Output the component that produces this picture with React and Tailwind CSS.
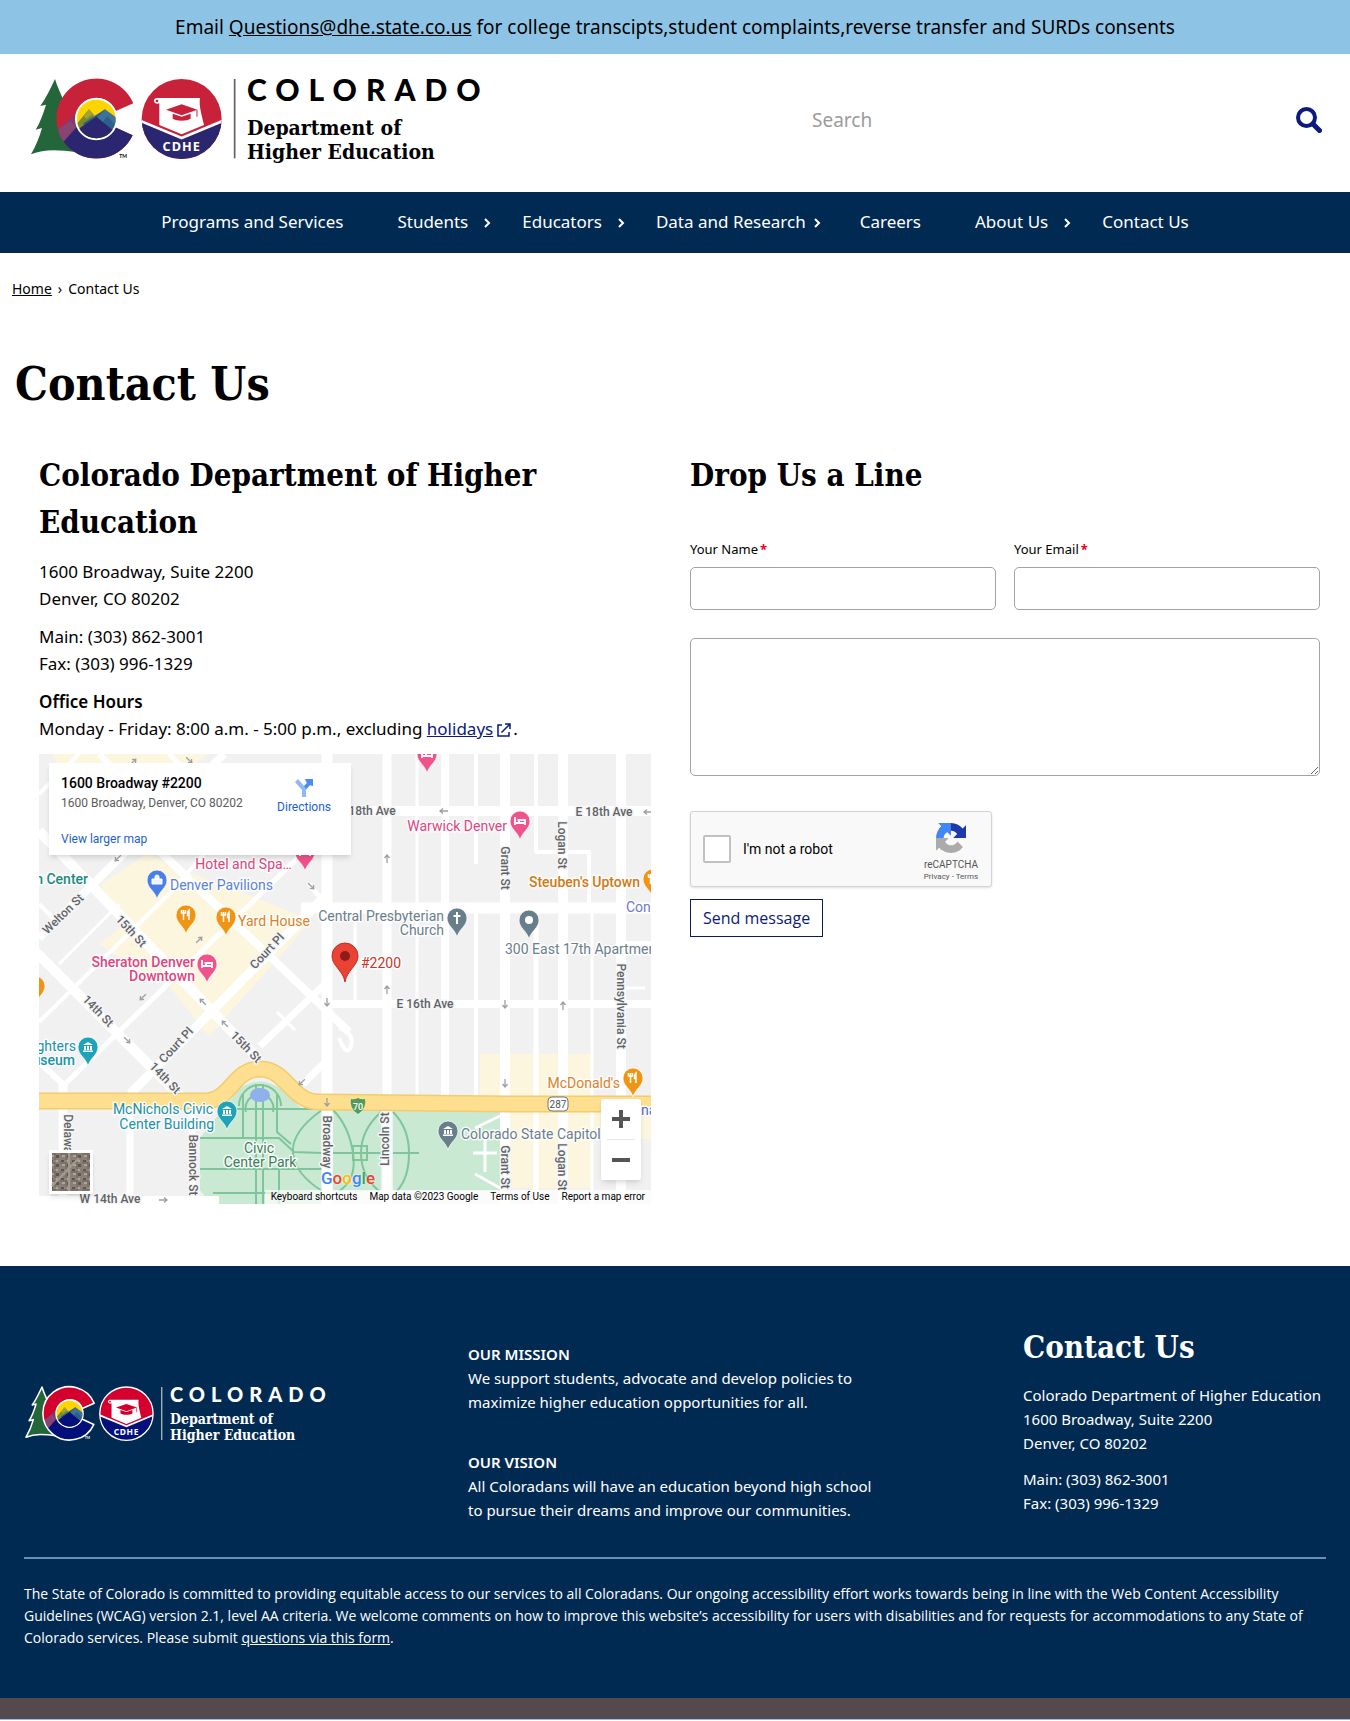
import React from 'react';

const SLAB = "font-['DejaVu_Serif_Condensed','DejaVu_Serif',serif]";
const h2Class = "font-['DejaVu_Serif_Condensed','DejaVu_Serif',serif] text-[31px] leading-[47px] font-bold";

function Logo({ inverse = false, className }) {
  const ink = inverse ? 'fill-white' : 'fill-black';
  const red = inverse ? '#d3002f' : '#c8213a';
  const navy = inverse ? '#03107c' : '#2a2770';
  const outline = inverse ? '#ffffff' : 'none';
  return (
    <svg viewBox="0 0 456 90" className={className} role="img" aria-label="Colorado Department of Higher Education">
      <g transform="translate(-8 -6) scale(.3333)">
        <path
          d="M105 27 C92 55 78 85 61 108 L78 104 C70 132 60 158 47 179 L66 174 C58 204 46 230 33 253 C75 236 115 240 175 247 L175 60 L133 95 C122 72 112 50 105 27Z"
          fill="#23663a" stroke={outline} strokeWidth={inverse ? 7 : 0} strokeLinejoin="round"
        />
        <clipPath id={inverse ? 'cLetterInv' : 'cLetter'}>
          <path d="M340 100 A120 120 0 1 0 338 196 L282 170 A58 58 0 1 1 286 124Z" />
        </clipPath>
        <g clipPath={inverse ? 'url(#cLetterInv)' : 'url(#cLetter)'}>
          <rect x="100" y="20" width="260" height="260" fill={red} />
          <path d="M100 240 L210 118 L350 150 V290 H100Z" fill={navy} />
          <path d="M95 230 L108 182 L182 118 L190 150 L130 216 Z" fill="#7b3b74" opacity=".85" />
          <path d="M108 182 L150 152 L168 170 L130 216 L112 195Z" fill="#8b4a77" opacity=".7" />
        </g>
        {inverse && (
          <path d="M340 100 A120 120 0 1 0 338 196 L282 170 A58 58 0 1 1 286 124Z" fill="none" stroke="#fff" strokeWidth="7" strokeLinejoin="round" />
        )}
        <circle cx="229" cy="147" r="61" fill="#fed500" stroke="#fff" strokeWidth="6" />
        <clipPath id={inverse ? 'sunInv' : 'sun'}><circle cx="229" cy="147" r="58" /></clipPath>
        <g clipPath={inverse ? 'url(#sunInv)' : 'url(#sun)'}>
          <path d="M150 185 L207 118 L270 190 V210 H150Z" fill="#7a8a2c" />
          <path d="M190 160 L255 118 L300 165 V210 H200Z" fill="#2c5f8d" />
          <path d="M255 118 L232 143 L246 158 L262 138 L290 170 L300 150Z" fill="#3c7397" />
          <path d="M207 118 L190 138 L200 146 L215 134 L226 144Z" fill="#a3a238" />
          <path d="M168 205 L168 182 L229 140 L290 190 V215 H168Z" fill={navy} />
        </g>
        <circle cx="485" cy="147" r="120" fill={red} />
        <clipPath id={inverse ? 'oInv' : 'o'}><circle cx="485" cy="147" r="120" /></clipPath>
        <g clipPath={inverse ? 'url(#oInv)' : 'url(#o)'}>
          <path d="M360 152 L485 204 L610 152 V280 H360Z" fill={navy} />
          <path d="M360 152 L485 204 L610 152" fill="none" stroke="#fff" strokeWidth="8" />
        </g>
        {inverse && <circle cx="485" cy="147" r="120" fill="none" stroke="#fff" strokeWidth="6" />}
        <path d="M412 84 H540 C536 108 546 138 552 165 L485 193 L418 165 V100 C410 104 402 98 402 92 C402 87 406 84 412 84Z" fill="#fff" />
        <circle cx="411" cy="93" r="4" fill={red} />
        <path d="M485 103 L532 119 L485 136 L438 119Z" fill={red} />
        <path d="M458 131 L485 140 L512 131 V146 C500 154 470 154 458 146Z" fill={red} />
        <path d="M531 119 V140" stroke={red} strokeWidth="3" />
        <text x="485" y="242" textAnchor="middle" className="fill-white font-['Noto_Sans'] text-[38px] font-bold tracking-[3px]">CDHE</text>
        <text x="298" y="263" className={`${ink} font-[Lato] text-[15px] font-bold`}>TM</text>
        <path d="M644 27 V265" stroke={inverse ? '#c9d3e0' : '#5f6062'} strokeWidth="5" />
      </g>
      <text x="219" y="25" className={`${ink} font-[Lato] text-[30px] font-black tracking-[9px]`}>COLORADO</text>
      <text x="219" y="59" className={`${ink} ${SLAB} text-[21px] font-bold`}>Department of</text>
      <text x="219" y="83" className={`${ink} ${SLAB} text-[21px] font-bold`}>Higher Education</text>
    </svg>
  );
}

const NAV = [
  { label: 'Programs and Services' },
  { label: 'Students', chevron: 'right-1' },
  { label: 'Educators', chevron: 'right-1' },
  { label: 'Data and Research', chevron: 'right-3' },
  { label: 'Careers' },
  { label: 'About Us', chevron: 'right-1' },
  { label: 'Contact Us' },
];

const PINK = '#e0457f';
const ORANGE = '#d9822b';
const SLATE = '#6b7f8c';
const TEAL = '#1b93a8';
const STREET = '#5f6368';

// Streets: [path, width]
const ROADS = [
  ['M348 0V450', 9], ['M378 0V345', 3], ['M406 0V345', 8], ['M437 0V110', 4], ['M437 154V345', 4],
  ['M466 0V450', 10], ['M497 0V98H550V154', 4], ['M497 154V450', 5], ['M524 0V450', 10], ['M553 150V450', 3],
  ['M582 0V450', 10], ['M316 154V250', 3], ['M288 0V450', 11], ['M260 57H612', 10], ['M262 154H612', 11],
  ['M288 250H612', 8], ['M0 446H180', 8], ['M586 189H612', 4], ['M586 234H606', 3],
  ['M0 77L221 307', 10], ['M-4 197L145 346', 10], ['M91 340L173 257L288 140', 9], ['M0 184L185 0', 8],
  ['M84 62L178 152L310 278', 8], ['M24 332L275 88', 5], ['M0 268L130 140L200 60', 4], ['M221 292L288 228', 7],
  ['M264 330L290 304', 7], ['M24 327V450', 9], ['M91 345V446', 7], ['M153 345V446', 7], ['M0 308L26 332', 6],
  ['M0 40L40 0', 4], ['M60 0L130 70', 6], ['M130 0L200 70', 5], ['M238 258L256 276', 3], ['M20 210L80 150', 3],
  ['M270 130L290 154', 5], ['M0 150L14 164', 4],
];

const LABELS = [
  ['Hotel and Spa…', 253, 115, PINK, 'end'],
  ['n Center', 49, 130, '#1c8a80', 'end', true],
  ['Denver Pavilions', 131, 136, '#5b83d6', 'start'],
  ['Yard House', 199, 172, ORANGE, 'start'],
  ['Sheraton Denver', 156, 213, PINK, 'end', true],
  ['Downtown', 156, 227, PINK, 'end', true],
  ['Central Presbyterian', 405, 167, SLATE, 'end'],
  ['Church', 405, 181, SLATE, 'end'],
  ['#2200', 322, 214, '#c5362c', 'start'],
  ['Warwick Denver', 468, 77, PINK, 'end'],
  ["Steuben's Uptown", 601, 133, '#d07a12', 'end', true],
  ['Con', 587, 158, '#6f78cf', 'start'],
  ['300 East 17th Apartments', 466, 200, SLATE, 'start'],
  ['ghters', 37, 297, TEAL, 'end'],
  ['useum', 36, 311, TEAL, 'end', true],
  ['McNichols Civic', 174, 360, TEAL, 'end'],
  ['Center Building', 175, 375, TEAL, 'end'],
  ['Civic', 220, 399, '#3d7f5c', 'middle'],
  ['Center Park', 221, 413, '#3d7f5c', 'middle'],
  ['Colorado State Capitol', 422, 385, SLATE, 'start'],
  ["McDonald's", 581, 334, ORANGE, 'end'],
  ['na', 602, 361, '#4a6fe0', 'start'],
];

// Street names: [text, centre x, centre y, angle]
const STREETS = [
  ['18th Ave', 333, 57, 0], ['E 18th Ave', 565, 58, 0], ['E 16th Ave', 386, 250, 0], ['W 14th Ave', 71, 445, 0],
  ['Grant St', 466, 114, 90], ['Logan St', 523, 91, 90], ['Grant St', 466, 413, 90], ['Logan St', 523, 413, 90],
  ['Pennsylvania St', 582, 252, 90], ['Lincoln St', 346, 385, -90], ['Broadway', 288, 388, 90],
  ['Bannock St', 154, 411, 90], ['Delaware', 29, 385, 90], ['Welton St', 24, 160, -44], ['15th St', 92, 177, 47],
  ['Court Pl', 228, 197, -47], ['14th St', 59, 257, 46], ['Court Pl', 137, 291, -47], ['14th St', 126, 324, 46],
  ['15th St', 207, 293, 46],
];

const GLYPHS = {
  bed: <path d="M-5 -4V4M-5 2H5M5 4V-1H-1V2M-3 -1h.5" fill="none" stroke="#fff" strokeWidth="1.8" />,
  food: <path d="M-2.5 -5V5M-4.5 -5v3h4v-3M3 5V-5q-2 2 -1.500 5.500h1.500" fill="none" stroke="#fff" strokeWidth="1.5" />,
  bag: <path d="M-5 -1H5V4H-5ZM-2 -1V-3a2 2 0 0 1 4 0V-1" fill="#fff" fillOpacity=".9" stroke="#fff" />,
  cross: <path d="M0 -6V6M-3.500 -2H3.500" stroke="#fff" strokeWidth="2" />,
  dot: <circle r="4" fill="#fff" />,
  museum: <path d="M-5 -2L0 -5L5 -2ZM-4 -1H-2V3H-4ZM-1 -1H1V3H-1ZM2 -1H4V3H2ZM-5 3.500H5V5H-5Z" fill="#fff" />,
};

const PINS = [
  [118, 126, '#4a7fe8', 'bag'], [147, 161, '#ef9413', 'food'], [187, 163, '#ef9413', 'food'], [168, 210, '#f0528b', 'bed'],
  [266, 98, '#f0528b', 'bed'], [388, 0, '#f0528b', 'bed'], [481, 67, '#f0528b', 'bed'], [418, 164, '#687f8b', 'cross'],
  [490, 166, '#687f8b', 'dot'], [614, 125, '#ef9413', 'food'], [-4, 232, '#ef9413', 'food'], [49, 293, '#1fa3b8', 'museum'],
  [188, 357, '#1fa3b8', 'museum'], [409, 377, '#687f8b', 'museum'], [594, 324, '#ef9413', 'food'],
];

const ARROWS = [
  [405, 57, 180], [348, 105, -90], [348, 236, -90], [466, 250, 90], [524, 252, -90], [466, 329, 90], [288, 248, 90],
  [288, 348, 90], [124, 446, 0], [104, 243, 135], [88, 286, 45], [164, 248, 225], [186, 270, 225], [263, 328, 135],
  [160, 186, -45], [79, 104, 135], [272, 132, 45], [94, 8, -45], [150, 6, 45], [609, 58, 180],
];

function MapDrawing() {
  return (
    <svg viewBox="0 0 612 450" preserveAspectRatio="xMidYMid slice" className="block h-full w-full bg-[#f1f1f2]" role="img" aria-label="Map of 1600 Broadway, Denver">
      <g fill="#fdf6de">
        <path d="M14 0H170L140 20H80L24 22Z" />
        <path d="M62 130L108 100L150 118L270 165L262 178L170 282L120 220L66 150Z" />
        <path d="M441 300H553V434H441Z" />
        <path d="M553 350H612V385H553Z" />
      </g>
      <path d="M60 190L150 120L182 150L108 222Z" fill="#fdf6de" />
      <g fill="#c9e9d3">
        <path d="M161 384L172 370L200 335Q221 320 242 335L262 354H283V450H172L161 436Z" />
        <path d="M294 356H342V437H294Z" />
        <path d="M354 357H461V437H354Z" />
      </g>
      <g fill="none" stroke="#7fc59b" strokeWidth="2">
        <path d="M180 355H283M161 384H240L255 398L283 399M161 415H283M174 439H240M217 330V450M224 330V450M204 340V384M238 340V378L252 390M240 450V412L252 402" />
        <path d="M200 352A20 20 0 0 1 242 352M207 358A14 14 0 1 1 234 358M283 356Q252 378 254 399T283 437M294 356Q310 372 314 399T300 437" />
        <path d="M342 358Q322 376 322 399T340 437M354 358Q370 374 370 399T358 437M294 399H342M354 399H380M314 392H328V406H314Z" />
      </g>
      <ellipse cx="221" cy="341" rx="10" ry="7" fill="#8fb0ea" />
      <g fill="none" stroke="#fff" strokeLinejoin="round">
        {ROADS.map(([d, w]) => <path key={d} d={d} strokeWidth={w} />)}
        <path d="M436 374L461 362M446 380V418M434 399H458M436 420L461 434" strokeWidth="3" />
        <path d="M300 274Q316 280 312 292T300 284" strokeWidth="4" />
      </g>
      <path d="M0 347H166C192 347 194 315 221 315S252 348 280 348L470 350H612" fill="none" stroke="#f2cc6d" strokeWidth="17" />
      <path d="M0 347H166C192 347 194 315 221 315S252 348 280 348L470 350H612" fill="none" stroke="#fddf8f" strokeWidth="14" />
      <g fill="none" stroke="#9aa0a6" strokeWidth="1.3">
        {ARROWS.map(([x, y, a]) => (
          <path key={`${x}-${y}`} d="M-4 0H4M1 -2.500L4 0L1 2.500" transform={`translate(${x} ${y}) rotate(${a})`} />
        ))}
      </g>
      <g stroke="#f5f5f5" strokeWidth="3" strokeLinejoin="round" className="font-[Roboto] text-[12px] font-medium [paint-order:stroke]">
        {STREETS.map(([t, x, y, a]) => (
          <text key={`${t}-${x}`} fill={STREET} textAnchor="middle" dominantBaseline="central" transform={`translate(${x} ${y}) rotate(${a})`}>{t}</text>
        ))}
      </g>
      <g stroke="#fff" strokeOpacity=".85" strokeWidth="3" strokeLinejoin="round" className="font-[Roboto] text-[14px] [paint-order:stroke]">
        {LABELS.map(([t, x, y, c, anchor, bold]) => (
          <text key={`${t}-${y}`} x={x} y={y} fill={c} textAnchor={anchor} fontWeight={bold ? 500 : 400}>{t}</text>
        ))}
      </g>
      {PINS.map(([x, y, c, glyph]) => (
        <g key={`${x}-${y}`} transform={`translate(${x} ${y})`}>
          <path d="M0 19C-2 11 -10 8 -10 0A10 10 0 0 1 10 0C10 8 2 11 0 19Z" fill={c} stroke="#fff" strokeWidth=".7" />
          {GLYPHS[glyph]}
        </g>
      ))}
      <path d="M306 228C304 216 293 212 293 202A13 13 0 0 1 319 202C319 212 308 216 306 228Z" fill="#ea4335" stroke="#b93126" />
      <circle cx="306" cy="202" r="5" fill="#8c1d18" />
      <path d="M312 345q3.500 1 7 -1q3.500 2 7 1q2 9 -7 15q-9 -6 -7 -15Z" fill="#4f9a5c" />
      <text x="319" y="356" textAnchor="middle" className="fill-white font-[Roboto] text-[9px] font-medium">70</text>
      <rect x="509" y="343" width="20" height="14" rx="4" fill="#fff" stroke="#70757a" />
      <text x="519" y="354" textAnchor="middle" className="fill-[#4d5156] font-[Roboto] text-[10px]">287</text>
    </svg>
  );
}

function MapPanel() {
  return (
    <div className="relative mt-3 h-[450px] overflow-hidden font-[Roboto]">
      <MapDrawing />
      <div className="absolute top-[9px] left-[10px] flex h-[92px] w-[302px] justify-between bg-white px-3 pt-[10px] pb-[6px] shadow-md">
        <div className="flex flex-col text-[12px] leading-[20px]">
          <strong className="text-[14px] leading-[20px] font-medium text-black">1600 Broadway #2200</strong>
          <span className="text-[#5b5b5b]">1600 Broadway, Denver, CO 80202</span>
          <a href="#larger" className="mt-auto text-[#1a62d0]">View larger map</a>
        </div>
        <a href="#directions" className="flex flex-col items-center px-2 pt-1 text-[12px] leading-[20px] text-[#1a62d0]">
          <svg viewBox="0 0 20 20" className="h-5 w-5" aria-hidden="true">
            <path d="M8 20V13L1 5L4 2L10 9L13 6L11 2H19V9L16 8L12 13V20Z" fill="#8fb9f6" />
            <path d="M11 2H19V9L16 8L12 12L10 9L13 6Z" fill="#4a8cf0" />
          </svg>
          Directions
        </a>
      </div>
      <svg viewBox="0 0 44 44" className="absolute bottom-[10px] left-[10px] h-11 w-11 shadow-md" role="img" aria-label="Satellite view">
        <defs>
          <pattern id="blocks" width="11" height="9" patternUnits="userSpaceOnUse">
            <rect width="11" height="9" fill="#8b8078" />
            <path d="M1 1h3v2h-3zM7 5h3v3h-3z" fill="#5d554f" />
            <path d="M5 1h4v2h-4zM2 5h3v2h-3z" fill="#b0a59a" />
            <path d="M0 4h6M6 0v9" stroke="#6e645c" />
          </pattern>
        </defs>
        <rect width="44" height="44" fill="#fff" />
        <rect x="3" y="3" width="38" height="38" fill="url(#blocks)" />
        <path d="M3 36L30 8M20 3V41" stroke="#a39a90" strokeWidth="2" />
      </svg>
      <div className="absolute right-[10px] bottom-6 flex w-10 flex-col items-center rounded-[2px] bg-white text-[#555] shadow-md">
        <button type="button" aria-label="Zoom in" className="grid h-10 w-full place-items-center">
          <svg viewBox="0 0 18 18" className="h-[18px] w-[18px]"><path d="M0 9H18M9 0V18" stroke="currentColor" strokeWidth="4" /></svg>
        </button>
        <span className="h-px w-7 bg-[#e6e6e6]" />
        <button type="button" aria-label="Zoom out" className="grid h-10 w-full place-items-center">
          <svg viewBox="0 0 18 18" className="h-[18px] w-[18px]"><path d="M0 9H18" stroke="currentColor" strokeWidth="4" /></svg>
        </button>
      </div>
      <div className="absolute bottom-4 left-[282px] flex text-[17px] leading-5 font-medium [text-shadow:0_0_2px_white]">
        <span className="text-[#4285f4]">G</span><span className="text-[#ea4335]">o</span><span className="text-[#fbbc05]">o</span>
        <span className="text-[#4285f4]">g</span><span className="text-[#34a853]">l</span><span className="text-[#ea4335]">e</span>
      </div>
      <div className="absolute right-0 bottom-0 flex h-[14px] items-center gap-3 bg-white/70 px-[6px] text-[10px] leading-[14px] text-black">
        <button type="button">Keyboard shortcuts</button>
        <span>Map data ©2023 Google</span>
        <a href="#terms">Terms of Use</a>
        <a href="#report">Report a map error</a>
      </div>
    </div>
  );
}

function Field({ id, label, type }) {
  return (
    <div className="flex flex-col">
      <label htmlFor={id} className="text-[13px] leading-5">
        {label}<span className="ml-[2px] font-bold text-[#f00018]">*</span>
      </label>
      <input id={id} type={type} required className="mt-2 h-[43px] w-full rounded-[5px] border border-[#a3a3a3] px-3 shadow-none outline-none" />
    </div>
  );
}

function Captcha() {
  return (
    <div className="mt-[35px] flex h-[76px] w-[302px] items-center justify-between rounded-[3px] border border-[#d3d3d3] bg-[#f9f9f9] pr-2 pl-3 font-[Roboto] shadow-sm">
      <label className="flex items-center gap-3 text-[14px] leading-5">
        <input type="checkbox" className="h-7 w-7 appearance-none rounded-[2px] border-2 border-[#c1c1c1] bg-white" />
        I'm not a robot
      </label>
      <div className="flex w-16 flex-col items-center pt-2 text-[#555]">
        <svg viewBox="0 0 64 64" className="h-[30px] w-[30px]" aria-hidden="true">
          <path fill="#1c3aa9" d="M64 31.955l-.033-1.37V4.687l-7.16 7.16C50.948 4.674 42.033.093 32.05.093c-10.4 0-19.622 4.96-25.458 12.64l11.736 11.86a15.55 15.55 0 0 1 4.754-5.334c2.050-1.600 4.952-2.906 8.968-2.906.485 0 .86.057 1.135.163 4.976.393 9.288 3.140 11.828 7.124l-8.307 8.307L64 31.953" />
          <path fill="#4285f4" d="M31.862.094l-1.370.033H4.594l7.160 7.160C4.580 13.147 0 22.060 0 32.046c0 10.400 4.960 19.622 12.640 25.458L24.500 45.768a15.550 15.550 0 0 1-5.334-4.754c-1.600-2.050-2.906-4.952-2.906-8.968 0-.485.057-.86.163-1.135.393-4.976 3.140-9.288 7.124-11.828l8.307 8.307L31.860.095" />
          <path fill="#ababab" d="M.001 32.045l.033 1.370v25.898l7.160-7.160c5.860 7.173 14.774 11.754 24.760 11.754 10.400 0 19.622-4.960 25.458-12.640l-11.736-11.860a15.550 15.550 0 0 1-4.754 5.334c-2.050 1.600-4.952 2.906-8.968 2.906-.485 0-.86-.057-1.135-.163-4.976-.393-9.288-3.140-11.828-7.124l8.307-8.307c-10.522.04-22.400.066-27.295-.005" />
        </svg>
        <span className="mt-[6px] text-[10px] leading-3">reCAPTCHA</span>
        <span className="text-[8px] leading-3 whitespace-nowrap">
          <a href="#privacy">Privacy</a> - <a href="#captcha-terms">Terms</a>
        </span>
      </div>
    </div>
  );
}

export default function App() {
  return (
    <div className="bg-white font-['Noto_Sans',sans-serif] text-black">
      <div className="bg-[#8dc4e6] py-[13px] text-center text-[19px] leading-7">
        Email <a href="mailto:Questions@dhe.state.co.us" className="underline">Questions@dhe.state.co.us</a> for college transcipts,student complaints,reverse transfer and SURDs consents
      </div>

      <header>
        <div className="flex items-start justify-between px-7 pt-[22px] pb-[26px]">
          <a href="#home"><Logo className="h-[90px] w-[456px]" /></a>
          <form role="search" className="mt-6 flex w-[510px] items-center">
            <input type="text" aria-label="Search" placeholder="Search" className="h-10 min-w-0 flex-1 bg-transparent text-[19px] outline-none placeholder:text-[#9b9b9b]" />
            <button type="submit" aria-label="Search" className="p-0">
              <svg viewBox="0 0 26 26" className="h-[26px] w-[26px] text-[#0b1a7c]" fill="none" stroke="currentColor">
                <circle cx="10.500" cy="10.500" r="8.500" strokeWidth="4" />
                <path d="M17 17L23.500 23.500" strokeWidth="5" strokeLinecap="round" />
              </svg>
            </button>
          </form>
        </div>
        <nav aria-label="Main" className="bg-[#012a53] pb-[2px]">
          <ul className="flex justify-center">
            {NAV.map((item) => (
              <li key={item.label} className="relative px-[27px]">
                <a href="#nav" className="block text-[17px] leading-[59px] whitespace-nowrap text-white">{item.label}</a>
                {item.chevron && (
                  <svg viewBox="0 0 8 10" className={`absolute top-[26px] h-[10px] w-2 text-white ${item.chevron}`} fill="none" stroke="currentColor" strokeWidth="2" aria-hidden="true">
                    <path d="M2 1L6 5L2 9" />
                  </svg>
                )}
              </li>
            ))}
          </ul>
        </nav>
      </header>

      <main className="pb-[62px]">
        <nav aria-label="Breadcrumb" className="mt-6 flex gap-[6px] px-3 text-[14px] leading-6">
          <a href="#home" className="underline">Home</a>
          <span>›</span>
          <span>Contact Us</span>
        </nav>
        <h1 className={`${SLAB} mt-[55px] px-[15px] text-[46px] leading-[56px] font-bold`}>Contact Us</h1>

        <div className="mt-10 grid grid-cols-[612fr_630fr] gap-x-[39px] pr-[30px] pl-[39px]">
          <section>
            <h2 className={h2Class}>Colorado Department of Higher Education</h2>
            <div className="mt-3 flex flex-col gap-[11px] text-[17px] leading-[27px]">
              <p>1600 Broadway, Suite 2200<br />Denver, CO 80202</p>
              <p>Main: (303) 862-3001<br />Fax: (303) 996-1329</p>
              <p>
                <strong className="font-semibold">Office Hours</strong><br />
                Monday - Friday: 8:00 a.m. - 5:00 p.m., excluding{' '}
                <a href="#holidays" className="text-[#0b1a7c]">
                  <span className="underline">holidays</span>
                  <svg viewBox="0 0 14 14" className="mr-[2px] ml-1 inline h-[14px] w-[14px] align-[-2px]" fill="none" stroke="currentColor" strokeWidth="1.500" aria-hidden="true">
                    <path d="M5 2H1V13H12V9M4.500 9.500L12.500 1.500M8 1H13V6" />
                  </svg>
                </a>.
              </p>
            </div>
            <MapPanel />
          </section>

          <section>
            <h2 className={h2Class}>Drop Us a Line</h2>
            <form className="mt-10">
              <div className="grid grid-cols-2 gap-[18px]">
                <Field id="name" label="Your Name" type="text" />
                <Field id="email" label="Your Email" type="email" />
              </div>
              <textarea aria-label="Message" className="mt-7 block h-[138px] w-full resize-y rounded-[5px] border border-[#a3a3a3] p-3 outline-none" />
              <Captcha />
              <button type="submit" className="mt-3 block h-[38px] border border-[#0b1a5c] px-3 font-['Open_Sans',sans-serif] text-[16px] leading-6 text-[#0b1a7c]">Send message</button>
            </form>
          </section>
        </div>
      </main>

      <footer className="bg-[#012a53] px-6 pt-[58px] pb-[49px] text-white">
        <div className="grid grid-cols-[444fr_555fr_303fr] items-start text-[15px] leading-6">
          <a href="#home" className="mt-[61px]"><Logo inverse className="h-[60px] w-[304px]" /></a>
          <div className="mt-[18px] flex max-w-[420px] flex-col gap-9">
            <p><strong className="font-semibold">OUR MISSION</strong><br />We support students, advocate and develop policies to maximize higher education opportunities for all.</p>
            <p><strong className="font-semibold">OUR VISION</strong><br />All Coloradans will have an education beyond high school to pursue their dreams and improve our communities.</p>
          </div>
          <div className="whitespace-nowrap">
            <h2 className={h2Class}>Contact Us</h2>
            <p className="mt-3">Colorado Department of Higher Education<br />1600 Broadway, Suite 2200<br />Denver, CO 80202</p>
            <p className="mt-3">Main: (303) 862-3001<br />Fax: (303) 996-1329</p>
          </div>
        </div>
        <hr className="mt-[35px] border-t-2 border-[#6592bd]" />
        <p className="mt-6 font-['Open_Sans',sans-serif] text-[14px] leading-[22px]">
          The State of Colorado is committed to providing equitable access to our services to all Coloradans. Our ongoing accessibility effort works towards being in line with the Web Content Accessibility Guidelines (WCAG) version 2.1, level AA criteria. We welcome comments on how to improve this website’s accessibility for users with disabilities and for requests for accommodations to any State of Colorado services. Please submit <a href="#form" className="underline">questions via this form</a>.
        </p>
      </footer>
      <div className="h-[22px] border-b border-[#8dc4e6] bg-[#544a4d]" />
    </div>
  );
}
